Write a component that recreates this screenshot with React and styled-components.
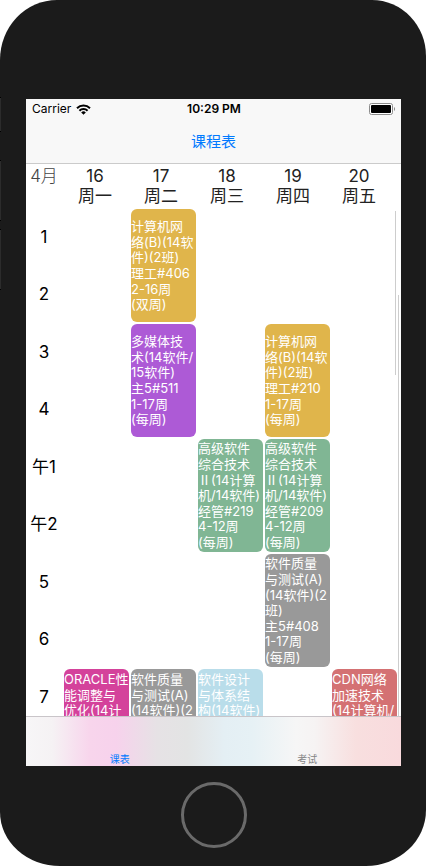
import React from "react";
import styled, { createGlobalStyle } from "styled-components";

const sans = `Inter, "Noto Sans CJK SC", sans-serif`;

const GlobalStyle = createGlobalStyle`
  * { box-sizing: border-box; }
  body { margin: 0; background: #fff; font-family: ${sans}; }
  button { font-family: inherit; border: 0; padding: 0; background: none; cursor: pointer; }
`;

const Phone = styled.div`
  position: relative;
  display: flex;
  flex-direction: column;
  min-height: 100vh;
  padding: 99px 25px 0 26px;
  background: #1b1b1b;
  border-radius: 57px 54px 60px 60px / 60px 56px 56px 54px;
  overflow: hidden;
`;

const SideKey = styled.span`
  position: absolute;
  left: 0;
  top: ${(p) => p.$top}px;
  width: 1px;
  height: ${(p) => p.$height}px;
  background: #2c2c2c;
  border-top: 1px solid #000;
  border-bottom: 1px solid #000;
`;

const Screen = styled.main`
  flex: 1;
  display: flex;
  flex-direction: column;
  min-height: 0;
  background: #fff;
  overflow: hidden;
`;

const TopBar = styled.header`
  background: #f8f8f8;
  border-bottom: 1px solid #cbcbcb;
`;

const StatusBar = styled.div`
  display: grid;
  grid-template-columns: 1fr auto 1fr;
  align-items: center;
  height: 20px;
  padding: 0 5px 0 6px;
  color: #000;
  font-size: 12px;
  line-height: 20px;
`;

const Carrier = styled.span`
  display: flex;
  align-items: center;
  gap: 5px;
`;

const Clock = styled.time`
  font-weight: 600;
`;

const BatteryIcon = styled.svg`
  justify-self: end;
`;

const Title = styled.h1`
  margin: 0;
  padding-top: 2px;
  height: 44px;
  color: #007aff;
  font-size: 15px;
  font-weight: 400;
  line-height: 42px;
  text-align: center;
`;

const Days = styled.div`
  display: grid;
  grid-template-columns: 36px repeat(5, 1fr) 9px;
  padding-top: 2px;
  height: 45px;
  color: #222;
  font-size: 17px;
  line-height: 20px;
  text-align: center;
`;

const Day = styled.div`
  display: flex;
  flex-direction: column;
  white-space: nowrap;
`;

const Month = styled.div`
  color: #444;
  font-weight: 300;
`;

const Viewport = styled.div`
  position: relative;
  flex: 1 1 0;
  min-height: 0;
  overflow: hidden;
`;

const Board = styled.div`
  display: grid;
  grid-template-columns: 36px 1fr;
  gap: 2px;
  padding-right: 4px;
`;

const Periods = styled.div`
  display: grid;
  grid-template-rows: repeat(5, 113px);
  gap: 2px;
`;

const PeriodPair = styled.div`
  display: grid;
  grid-template-rows: 1fr 1fr;
  align-items: center;
  color: #000;
  font-size: 17px;
  line-height: 20px;
  text-align: center;
  white-space: nowrap;
`;

const Lessons = styled.div`
  display: grid;
  grid-template-columns: repeat(5, minmax(0, 1fr));
  grid-template-rows: repeat(5, 113px);
  gap: 2px;
`;

const Lesson = styled.button`
  grid-column: ${(p) => p.$day};
  grid-row: ${(p) => p.$slot};
  display: flex;
  flex-direction: column;
  justify-content: ${(p) => (p.$slot === 5 ? "flex-start" : "center")};
  padding-top: ${(p) => (p.$slot === 5 ? 3 : 1)}px;
  overflow: hidden;
  border-radius: 6px;
  background: ${(p) => p.$color};
  color: #fff;
  font-size: 13px;
  line-height: 1.2;
  text-align: left;
  white-space: pre;
`;

const LessonText = styled.span`
  display: block;
`;

const Numeral = styled.span`
  font-family: "Noto Sans CJK SC", sans-serif;
  line-height: 1;
`;

const ScrollMark = styled.span`
  position: absolute;
  right: ${(p) => p.$right}px;
  top: ${(p) => p.$top}px;
  bottom: ${(p) => p.$bottom};
  height: ${(p) => p.$height};
  width: 1px;
  background: #cdcdcd;
`;

const TabBar = styled.nav`
  display: grid;
  grid-template-columns: 1fr 1fr;
  height: 50px;
  border-top: 1px solid #c9c5c9;
  background: linear-gradient(90deg, #f7f6f7 0%, #f5f2f4 7%, #f8d5ec 17%, #f7d2ec 24%, #e6e2e5 35%,
    #e3e4e4 43%, #e4eff4 53%, #e6f1f5 60%, #f6f6f6 72%, #f6f3f3 77%, #f8dfdf 88%, #f9dadd 100%);
`;

const Tab = styled.button`
  display: flex;
  align-items: flex-end;
  justify-content: center;
  color: ${(p) => (p.$active ? "#007aff" : "#858585")};
  font-size: 10px;
  font-weight: 400;
  line-height: 14px;
`;

const Chin = styled.footer`
  display: flex;
  justify-content: center;
  height: 100px;
  padding-top: 16px;
`;

const HomeButton = styled.button`
  width: 66px;
  height: 66px;
  && { border: 3px solid #6a6a6a; }
  border-radius: 50%;
`;

const days = [
  ["16", "周一"],
  ["17", "周二"],
  ["18", "周三"],
  ["19", "周四"],
  ["20", "周五"],
];

const periods = [
  ["1", "2"],
  ["3", "4"],
  ["午1", "午2"],
  ["5", "6"],
  ["7"],
];

const lessons = [
  { day: 2, slot: 1, color: "#e0b54b", text: "计算机网\n络(B)(14软\n件)(2班)\n理工#406\n2-16周\n(双周)" },
  { day: 2, slot: 2, color: "#ad5ad6", text: "多媒体技\n术(14软件/\n15软件)\n主5#511\n1-17周\n(每周)" },
  { day: 4, slot: 2, color: "#e0b54b", text: "计算机网\n络(B)(14软\n件)(2班)\n理工#210\n1-17周\n(每周)" },
  { day: 3, slot: 3, color: "#80b694", text: "高级软件\n综合技术\nⅡ(14计算\n机/14软件)\n经管#219\n4-12周\n(每周)" },
  { day: 4, slot: 3, color: "#80b694", text: "高级软件\n综合技术\nⅡ(14计算\n机/14软件)\n经管#209\n4-12周\n(每周)" },
  { day: 4, slot: 4, color: "#999999", text: "软件质量\n与测试(A)\n(14软件)(2\n班)\n主5#408\n1-17周\n(每周)" },
  { day: 1, slot: 5, color: "#d4429b", text: "ORACLE性\n能调整与\n优化(14计" },
  { day: 2, slot: 5, color: "#999999", text: "软件质量\n与测试(A)\n(14软件)(2" },
  { day: 3, slot: 5, color: "#b9ddea", text: "软件设计\n与体系结\n构(14软件)" },
  { day: 5, slot: 5, color: "#d47173", text: "CDN网络\n加速技术\n(14计算机/" },
];

const withNumerals = (text) =>
  text.split(/(Ⅱ)/).map((part, i) => (part === "Ⅱ" ? <Numeral key={i}>{part}</Numeral> : part));

const Wifi = () => (
  <svg width="15" height="11" viewBox="0 0 15 11" aria-label="Wi-Fi">
    <g fill="none" stroke="#000" strokeWidth="2">
      <path d="M1 4.2a9.2 9.2 0 0 1 13 0" />
      <path d="M3.4 6.7a5.8 5.8 0 0 1 8.2 0" />
    </g>
    <path d="M5.2 8.4a3.3 3.3 0 0 1 4.6 0L7.5 10.7Z" fill="#000" />
  </svg>
);

const Battery = () => (
  <BatteryIcon width="27" height="12" viewBox="0 0 27 12" aria-label="Battery">
    <rect x="0.5" y="0.5" width="23" height="11" rx="2" fill="#fff" stroke="#8c8c8c" />
    <rect x="2" y="2" width="20" height="8" rx="1" fill="#000" />
    <path d="M25 4a2.4 2.4 0 0 1 0 4Z" fill="#8c8c8c" />
  </BatteryIcon>
);

export default function App() {
  return (
    <>
      <GlobalStyle />
      <Phone>
        <SideKey $top={97} $height={35} />
        <SideKey $top={160} $height={61} />
        <SideKey $top={229} $height={61} />
        <Screen>
          <TopBar>
            <StatusBar>
              <Carrier>Carrier <Wifi /></Carrier>
              <Clock>10:29 PM</Clock>
              <Battery />
            </StatusBar>
            <Title>课程表</Title>
          </TopBar>
          <Days>
            <Month>4月</Month>
            {days.map(([date, name]) => (
              <Day key={date}>
                <span>{date}</span>
                <span>{name}</span>
              </Day>
            ))}
          </Days>
          <Viewport>
            <Board>
              <Periods>
                {periods.map((pair) => (
                  <PeriodPair key={pair[0]}>
                    {pair.map((name) => (
                      <span key={name}>{name}</span>
                    ))}
                  </PeriodPair>
                ))}
              </Periods>
              <Lessons>
                {lessons.map((l) => (
                  <Lesson key={`${l.day}-${l.slot}`} $day={l.day} $slot={l.slot} $color={l.color}>
                    <LessonText>{withNumerals(l.text)}</LessonText>
                  </Lesson>
                ))}
              </Lessons>
            </Board>
            <ScrollMark $right={5} $top={2} $height="164px" />
            <ScrollMark $right={2} $top={86} $bottom="0" />
          </Viewport>
          <TabBar>
            <Tab $active>课表</Tab>
            <Tab>考试</Tab>
          </TabBar>
        </Screen>
        <Chin>
          <HomeButton aria-label="Home" />
        </Chin>
      </Phone>
    </>
  );
}
